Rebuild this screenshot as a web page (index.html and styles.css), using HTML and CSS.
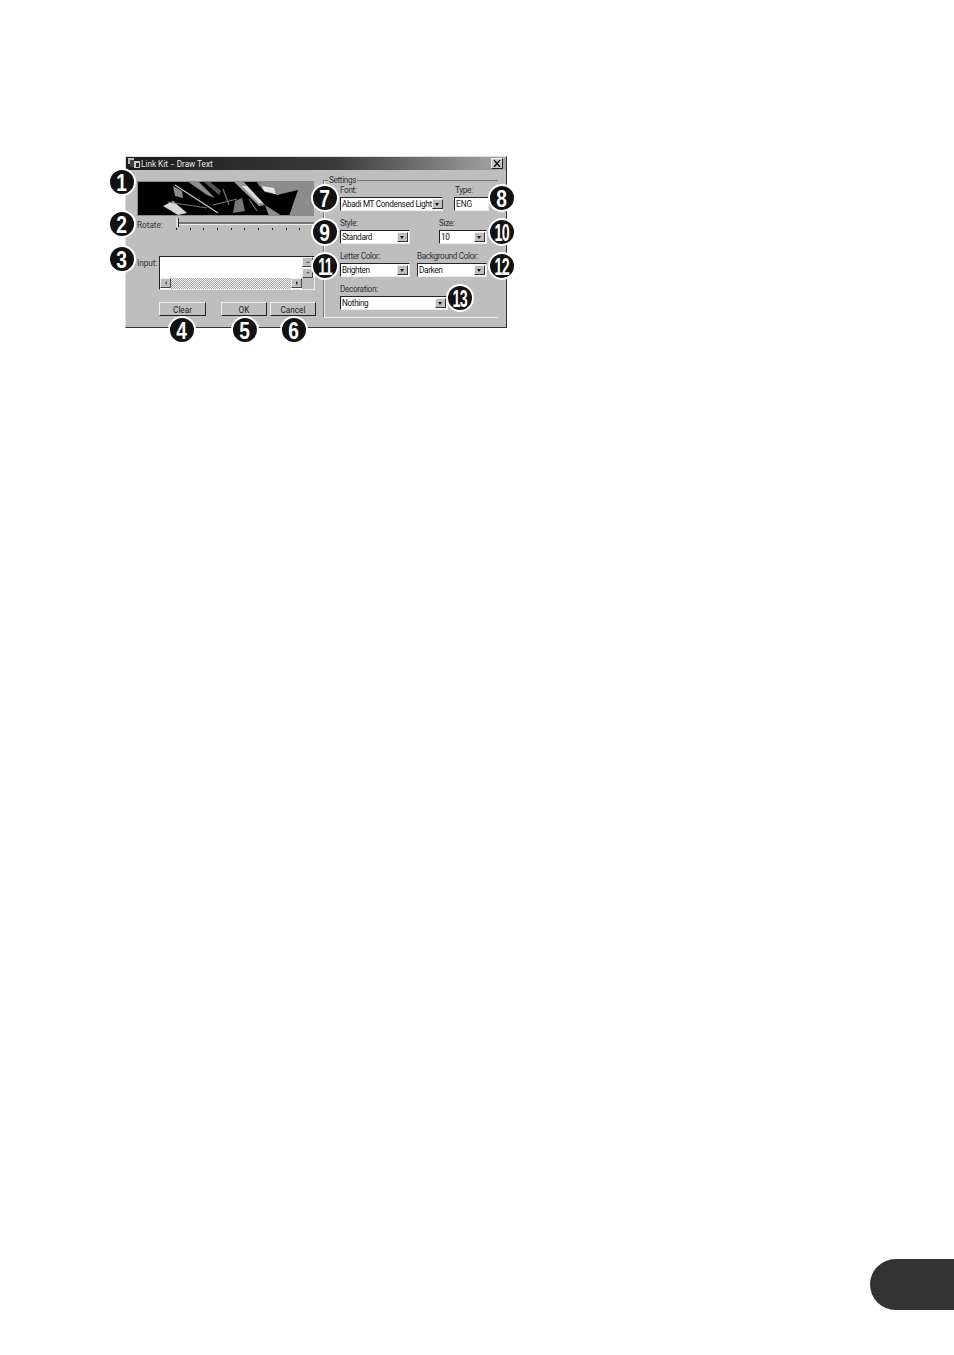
FILE: index.html
```html
<!DOCTYPE html>
<html lang="en">
<head>
    <meta charset="UTF-8">
    <title>Link Kit - Draw Text</title>
    <link rel="stylesheet" href="styles.css">
</head>
<body>

    <div class="dialog">
        <!-- Title bar -->
        <div class="titlebar">
            <svg class="app-icon" width="12" height="11" viewBox="0 0 12 11">
                <rect x="0" y="0" width="6" height="6" fill="#bbb"/>
                <rect x="2" y="2" width="4" height="7" fill="#444"/>
                <rect x="6" y="3" width="6" height="7" fill="#ccc"/>
                <rect x="8" y="5" width="3" height="4" fill="#222"/>
            </svg>
            <span class="title">Link Kit − Draw Text</span>
            <span class="close">
                <svg width="8" height="7" viewBox="0 0 8 7"><path d="M1 0 L7 7 M7 0 L1 7" stroke="#111" stroke-width="1.4"/></svg>
            </span>
        </div>

        <div class="dialog-body">
            <!-- Left side -->
            <div class="left">
                <svg class="preview" width="177" height="35" viewBox="0 0 177 35">
                    <rect width="177" height="35" fill="#8c8c8c"/>
                    <polygon points="0,0 118,0 140,14 161,9 152,35 0,35" fill="#000"/>
                    <polygon points="26,25 36,20 50,32 41,34" fill="#d8d8d8"/>
                    <polygon points="36,5 45,10 46,17 38,15" fill="#8c8c8c"/>
                    <path d="M38 4 L81 32" stroke="#ccc" stroke-width="1.2"/>
                    <path d="M31 21 L70 27" stroke="#777" stroke-width="1"/>
                    <polygon points="50,0 61,0 78,17 70,14" fill="#8c8c8c"/>
                    <polygon points="66,0 72,0 84,10 82,14" fill="#555"/>
                    <polygon points="96,0 106,0 128,24 122,25" fill="#999"/>
                    <polygon points="105,5 110,5 126,22 122,22" fill="#ddd"/>
                    <polygon points="98,20 105,17 108,30 96,32" fill="#777"/>
                    <path d="M112 18 L120 30 M86 8 L92 24 M76 24 L100 18" stroke="#777" stroke-width="1.2"/>
                    <polygon points="120,2 138,6 142,14 128,11" fill="#8c8c8c"/>
                    <polygon points="125,5 137,7 139,13 127,10" fill="#e6e6e6"/>
                    <polygon points="128,24 142,33 144,35 132,35" fill="#8c8c8c"/>
                    <rect x="0.5" y="0.5" width="176" height="34" fill="none" stroke="#8c8c8c"/>
                </svg>

                <div class="rotate-row">
                    <span class="lbl rotate-lbl">Rotate:</span>
                    <div class="slider">
                        <div class="track"></div>
                        <div class="thumb"></div>
                        <div class="ticks">
                            <i></i><i></i><i></i><i></i><i></i><i></i><i></i><i></i><i></i><i></i><i></i>
                        </div>
                    </div>
                </div>

                <div class="input-row">
                    <span class="lbl input-lbl">Input:</span>
                    <div class="textbox">
                        <div class="text-area"></div>
                        <div class="vscroll">
                            <span class="sbtn"><b class="up"></b></span>
                            <span class="sbtn"><b class="down"></b></span>
                        </div>
                        <div class="hscroll">
                            <span class="sbtn"><b class="prev"></b></span>
                            <span class="hfill"></span>
                            <span class="sbtn"><b class="next"></b></span>
                        </div>
                        <div class="corner"></div>
                    </div>
                </div>

                <div class="button-row">
                    <button class="btn btn-clear">Clear</button>
                    <button class="btn btn-ok">OK</button>
                    <button class="btn btn-cancel">Cancel</button>
                </div>
            </div>

            <!-- Settings group -->
            <fieldset class="settings">
                <legend>Settings</legend>
                <div class="form-row">
                    <div class="field"><label>Font:</label><div class="combo w-font"><span>Abadi MT Condensed Light</span><em></em></div></div>
                    <div class="field type-field"><label>Type:</label><div class="plain">ENG</div></div>
                </div>
                <div class="form-row">
                    <div class="field"><label>Style:</label><div class="combo w-mid"><span>Standard</span><em></em></div></div>
                    <div class="field size-field"><label>Size:</label><div class="combo w-size"><span>10</span><em></em></div></div>
                </div>
                <div class="form-row">
                    <div class="field"><label>Letter Color:</label><div class="combo w-mid"><span>Brighten</span><em></em></div></div>
                    <div class="field bg-field"><label>Background Color:</label><div class="combo w-mid"><span>Darken</span><em></em></div></div>
                </div>
                <div class="form-row">
                    <div class="field"><label>Decoration:</label><div class="combo w-deco"><span>Nothing</span><em></em></div></div>
                </div>
            </fieldset>
        </div>
    </div>

    <!-- Numbered callouts -->
    <span class="badge b1"><span>1</span></span>
    <span class="badge b2"><span>2</span></span>
    <span class="badge b3"><span>3</span></span>
    <span class="badge b4"><span>4</span></span>
    <span class="badge b5"><span>5</span></span>
    <span class="badge b6"><span>6</span></span>
    <span class="badge b7"><span>7</span></span>
    <span class="badge b8"><span>8</span></span>
    <span class="badge b9"><span>9</span></span>
    <span class="badge wide b10"><span>10</span></span>
    <span class="badge wide b11"><span>11</span></span>
    <span class="badge wide b12"><span>12</span></span>
    <span class="badge wide b13"><span>13</span></span>

    <div class="page-tab"></div>

</body>
</html>
```

FILE: styles.css
```css
html, body {
    margin: 0;
    padding: 0;
    background-color: #fff;
}

body {
    position: relative;
    width: 954px;
    height: 1355px;
    overflow: hidden;
    font-family: Roboto, "Liberation Sans", sans-serif;
    font-size: 8.2px;
    color: #222;
}

.dialog {
    box-sizing: border-box;
    width: 382px;
    height: 172px;
    margin: 156px 0 0 125px;
    background-color: #bebebe;
    border-right: 1px solid #333;
    border-bottom: 1px solid #333;
    border-left: 1px solid #ddd;
    border-top: 1px solid #ddd;
}

.titlebar {
    display: flex;
    align-items: center;
    height: 13px;
    padding: 0 3px 0 2px;
    background: linear-gradient(to right, #1c1c1c, #3a3a3a 55%, #a8a8a8);
    color: #e8e8e8;
}

.app-icon {
    margin-right: 1px;
}

.title {
    flex: 1;
}

.close {
    display: flex;
    align-items: center;
    justify-content: center;
    width: 10px;
    height: 9px;
    background-color: #c8c8c8;
    border: 1px solid #eee;
    border-right-color: #222;
    border-bottom-color: #222;
}

.dialog-body {
    display: flex;
    padding: 11px 0 0 11px;
}

.left {
    width: 186px;
}

.preview {
    display: block;
}

.lbl, label {
    color: #333;
}

.rotate-row {
    display: flex;
    margin-top: 2px;
}

.rotate-lbl {
    width: 39px;
    padding-top: 2px;
}

.slider {
    position: relative;
    width: 138px;
    height: 17px;
}

.track {
    height: 2px;
    margin-top: 4px;
    background-color: #777;
    border-bottom: 1px solid #eee;
}

.thumb {
    position: absolute;
    left: 0;
    top: 0;
    width: 2px;
    height: 9px;
    background-color: #ddd;
    border-right: 1px solid #222;
}

.ticks {
    display: flex;
    justify-content: space-between;
    margin-top: 3px;
}

.ticks i {
    width: 1px;
    height: 2px;
    background-color: #222;
}

.input-row {
    display: flex;
    margin-top: 21px;
}

.input-lbl {
    width: 22px;
    padding-top: 2px;
}

.textbox {
    display: grid;
    grid-template-columns: 1fr 12px;
    grid-template-rows: 21px 11px;
    box-sizing: border-box;
    width: 156px;
    height: 34px;
    background-color: #fff;
    border: 1px solid #222;
    border-right-color: #eee;
    border-bottom-color: #eee;
}

.text-area {
    background-color: #fff;
}

.vscroll {
    display: flex;
    flex-direction: column;
    justify-content: space-between;
    background-color: #fff;
}

.hscroll {
    display: flex;
}

.hfill {
    flex: 1;
    background-color: #d0d0d0;
    background-image: repeating-conic-gradient(#eee 0 25%, #aaa 0 50%);
    background-size: 2px 2px;
}

.corner {
    background-color: #bebebe;
}

.sbtn {
    display: flex;
    align-items: center;
    justify-content: center;
    box-sizing: border-box;
    width: 11px;
    height: 10px;
    background-color: #bebebe;
    border: 1px solid #eee;
    border-right-color: #444;
    border-bottom-color: #444;
}

.sbtn b {
    width: 0;
    height: 0;
    border-style: solid;
    border-color: transparent;
}

.sbtn .up { border-width: 0 2px 2px; border-bottom-color: #666; }
.sbtn .down { border-width: 2px 2px 0; border-top-color: #666; }
.sbtn .prev { border-width: 2px 2px 2px 0; border-right-color: #555; }
.sbtn .next { border-width: 2px 0 2px 2px; border-left-color: #222; }

.button-row {
    display: flex;
    margin-top: 12px;
    margin-left: 22px;
}

.btn {
    box-sizing: border-box;
    height: 14px;
    padding: 1px 0 0;
    font-family: inherit;
    font-size: 8.2px;
    color: #222;
    background-color: #bebebe;
    border: 1px solid #eee;
    border-right-color: #222;
    border-bottom-color: #222;
}

.btn-clear { width: 47px; margin-right: 15px; }
.btn-ok { width: 46px; margin-right: 3px; }
.btn-cancel { width: 46px; }

.settings {
    box-sizing: border-box;
    width: 175px;
    height: 143px;
    min-width: 0;
    margin: -6px 0 0 0;
    padding: 1px 0 0 16px;
    border: none;
    border-left: 1px solid #777;
    border-top: 1px solid #777;
    border-bottom: 1px solid #eee;
    box-shadow: inset 1px 0 0 #eee;
}

.settings legend {
    padding: 0 1px;
    margin-left: -12px;
    color: #333;
    letter-spacing: -0.35px;
}

.form-row {
    display: flex;
    height: 33px;
}

.field label {
    display: block;
    height: 9px;
    line-height: 9px;
    margin-bottom: 2px;
    letter-spacing: -0.35px;
}

.combo {
    display: flex;
    align-items: center;
    justify-content: space-between;
    box-sizing: border-box;
    height: 14px;
    padding: 0 1px 0 1px;
    background-color: #fff;
    border: 1px solid #222;
    border-right-color: #eee;
    border-bottom-color: #eee;
    color: #111;
    letter-spacing: -0.35px;
    white-space: nowrap;
}

.combo em {
    flex: none;
    width: 11px;
    height: 10px;
    box-sizing: border-box;
    border: 1px solid #eee;
    border-right-color: #333;
    border-bottom-color: #333;
    background: #bebebe;
    position: relative;
}

.combo em::after {
    content: "";
    position: absolute;
    left: 2px;
    top: 3px;
    border-style: solid;
    border-width: 3px 2.5px 0;
    border-color: #111 transparent transparent;
}

.w-font { width: 103px; }
.w-mid { width: 70px; }
.w-size { width: 48px; }
.w-deco { width: 108px; }

.type-field { margin-left: 11px; }
.type-field label { padding-left: 1px; }

.plain {
    box-sizing: border-box;
    width: 35px;
    height: 14px;
    line-height: 12px;
    padding-left: 1px;
    background-color: #fff;
    border: 1px solid #222;
    border-right-color: #eee;
    border-bottom-color: #eee;
}

.size-field { margin-left: 29px; }
.bg-field { margin-left: 7px; }

/* callouts sit over the dialog */
.badge {
    position: absolute;
    width: 24px;
    height: 24px;
    line-height: 25px;
    text-align: center;
    border-radius: 50%;
    background-color: #111;
    color: #fff;
    font-family: "Liberation Sans", sans-serif;
    font-size: 24px;
    font-weight: bold;
    border: 2px solid #fff;
}

.badge span {
    display: inline-block;
    transform: scaleX(0.8);
}

.badge.wide span {
    font-size: 23px;
    letter-spacing: -1px;
    transform: scaleX(0.62);
}

.b1 { left: 108px; top: 168px; }
.b2 { left: 108px; top: 210px; }
.b3 { left: 108px; top: 245px; }
.b4 { left: 168px; top: 316px; }
.b5 { left: 231px; top: 316px; }
.b6 { left: 280px; top: 316px; }
.b7 { left: 311px; top: 184px; }
.b8 { left: 488px; top: 184px; }
.b9 { left: 311px; top: 218px; }
.b10 { left: 488px; top: 218px; }
.b11 { left: 311px; top: 252px; }
.b12 { left: 488px; top: 252px; }
.b13 { left: 446px; top: 284px; }

.page-tab {
    position: absolute;
    left: 870px;
    top: 1259px;
    width: 84px;
    height: 51px;
    background-color: #333;
    border-radius: 26px 0 0 26px;
}
```
